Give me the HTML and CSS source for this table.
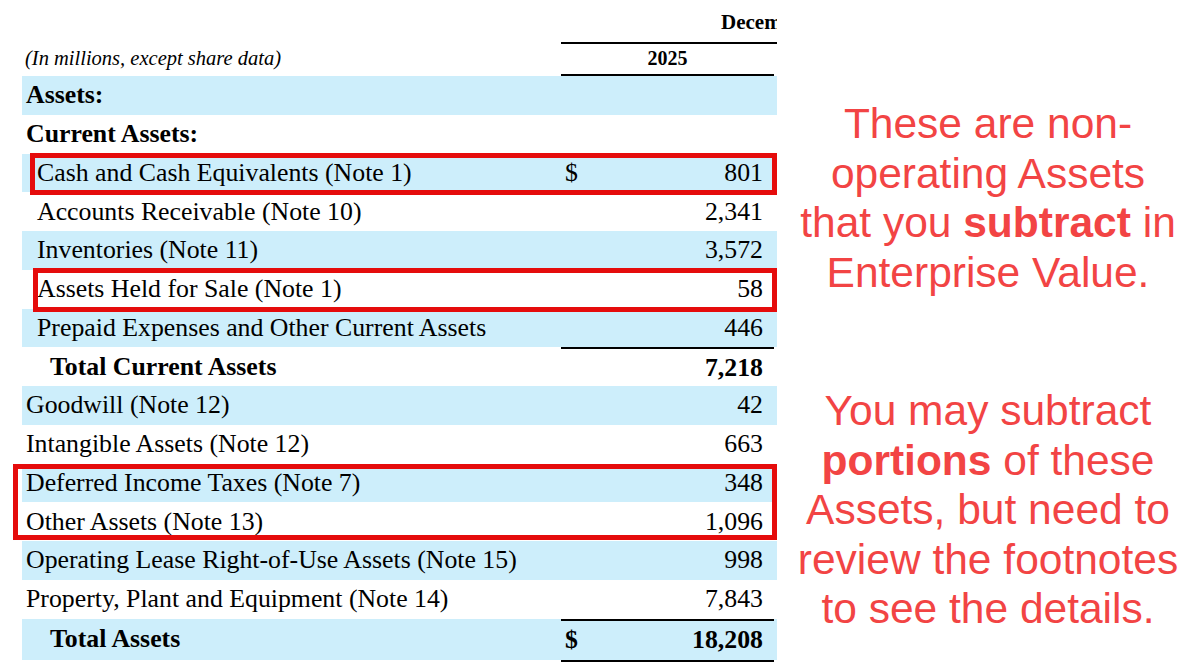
FILE: index.html
```html
<!DOCTYPE html>
<html lang="en">
<head>
<meta charset="utf-8">
<title>Balance Sheet – Assets</title>
<link rel="stylesheet" href="styles.css">
</head>
<body>
<div class="page">
  <section class="fs">
    <div class="hdr1">
      <div></div>
      <div class="period"><span>December 31,</span></div>
    </div>
    <div class="hdr2">
      <div class="note">(In millions, except share data)</div>
      <div class="year">2025</div>
    </div>

    <div class="row shade"><div class="lbl l0 b">Assets:</div><div class="amt"></div></div>
    <div class="row"><div class="lbl l0 b">Current Assets:</div><div class="amt"></div></div>
    <div class="row shade"><div class="lbl l1">Cash and Cash Equivalents (Note 1)</div><div class="amt"><span>$</span><span>801</span></div></div>
    <div class="row"><div class="lbl l1">Accounts Receivable (Note 10)</div><div class="amt"><span></span><span>2,341</span></div></div>
    <div class="row shade"><div class="lbl l1">Inventories (Note 11)</div><div class="amt"><span></span><span>3,572</span></div></div>
    <div class="row"><div class="lbl l1">Assets Held for Sale (Note 1)</div><div class="amt"><span></span><span>58</span></div></div>
    <div class="row shade"><div class="lbl l1">Prepaid Expenses and Other Current Assets</div><div class="amt"><span></span><span>446</span></div></div>
    <div class="row"><div class="lbl tot b">Total Current Assets</div><div class="amt ruled b"><span></span><span>7,218</span></div></div>
    <div class="row shade"><div class="lbl l0">Goodwill (Note 12)</div><div class="amt"><span></span><span>42</span></div></div>
    <div class="row"><div class="lbl l0">Intangible Assets (Note 12)</div><div class="amt"><span></span><span>663</span></div></div>
    <div class="row shade"><div class="lbl l0">Deferred Income Taxes (Note 7)</div><div class="amt"><span></span><span>348</span></div></div>
    <div class="row"><div class="lbl l0">Other Assets (Note 13)</div><div class="amt"><span></span><span>1,096</span></div></div>
    <div class="row shade"><div class="lbl l0">Operating Lease Right-of-Use Assets (Note 15)</div><div class="amt"><span></span><span>998</span></div></div>
    <div class="row"><div class="lbl l0">Property, Plant and Equipment (Note 14)</div><div class="amt"><span></span><span>7,843</span></div></div>
    <div class="row shade last"><div class="lbl tot b">Total Assets</div><div class="amt ruled b"><span>$</span><span>18,208</span></div></div>
    <div class="underline"><div></div><div class="dbl"></div></div>

    <div class="mark mark-cash"></div>
    <div class="mark mark-held"></div>
    <div class="mark mark-other"></div>
  </section>

  <aside class="panel">
    <p class="callout">These are non-operating Assets that you <strong>subtract</strong> in Enterprise Value.</p>
    <p class="callout second">You may subtract <strong>portions</strong> of these Assets, but need to review the footnotes to see the details.</p>
  </aside>
</div>
</body>
</html>
```

FILE: styles.css
```css
html, body {
  margin: 0;
  padding: 0;
  background: #fff;
}

.page {
  display: flex;
  width: 1193px;
  height: 667px;
  overflow: hidden;
}

.fs {
  position: relative;
  width: 777px;
  flex: none;
  padding-left: 22px;
  box-sizing: border-box;
  overflow: hidden;
  font-family: "Liberation Serif", "Times New Roman", serif;
  color: #000;
}

/* header */
.hdr1 {
  display: grid;
  grid-template-columns: 539px 1fr;
  height: 44px;
}
.period {
  border-bottom: 2px solid #000;
  font-weight: bold;
  font-size: 21px;
  white-space: nowrap;
  padding-left: 160px;
  padding-top: 10px;
  box-sizing: border-box;
}
.hdr2 {
  display: grid;
  grid-template-columns: 539px 213px;
  height: 32px;
}
.note {
  font-style: italic;
  font-size: 20.5px;
  padding-left: 3px;
  padding-bottom: 3px;
  display: flex;
  align-items: center;
}
.year {
  font-weight: bold;
  font-size: 20px;
  text-align: center;
  border-bottom: 2px solid #000;
  padding-bottom: 2px;
  display: flex;
  align-items: center;
  justify-content: center;
}

/* rows */
.row {
  display: grid;
  grid-template-columns: 539px 213px 3px;
  height: 38.75px;
  font-size: 25.8px;
}
.row.shade {
  background: #cdeefb;
}
.row.last {
  height: 41.5px;
}
.lbl {
  display: flex;
  align-items: center;
  white-space: nowrap;
}
.l0 { padding-left: 4px; }
.l1 { padding-left: 15px; }
.tot { padding-left: 28px; }
.b { font-weight: bold; }

.amt {
  display: flex;
  align-items: center;
  justify-content: space-between;
  padding: 0 11px 0 4px;
  box-sizing: border-box;
}
.amt.ruled {
  border-top: 2px solid #000;
}

.underline {
  display: grid;
  grid-template-columns: 539px 213px;
}
.dbl {
  border-top: 2px solid #000;
}

/* red annotation boxes over the table */
.mark {
  position: absolute;
  border: 5px solid #e50c0c;
  box-sizing: border-box;
}
.mark-cash {
  left: 30px;
  top: 153px;
  width: 747px;
  height: 42px;
}
.mark-held {
  left: 33px;
  top: 268px;
  width: 744px;
  height: 44px;
}
.mark-other {
  left: 13px;
  top: 464px;
  width: 764px;
  height: 76px;
}

/* right panel */
.panel {
  flex: 1;
  padding: 99px 10px 0 16px;
  font-family: "Liberation Sans", Arial, sans-serif;
  color: #f24444;
  text-align: center;
}
.callout {
  margin: 0;
  font-size: 42.5px;
  line-height: 49.5px;
}
.callout.second {
  margin-top: 89px;
}
.callout strong {
  font-weight: bold;
}
```
